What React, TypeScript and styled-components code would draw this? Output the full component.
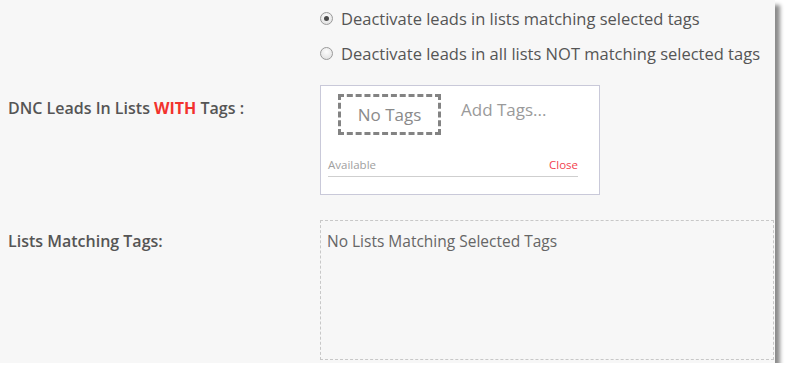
import React from "react";
import styled, { createGlobalStyle } from "styled-components";

const GlobalStyle = createGlobalStyle`
  html, body {
    margin: 0;
    padding: 0;
    background: #ffffff;
  }
  body {
    font-family: "Open Sans", "Noto Sans", sans-serif;
    color: #5a5a5a;
  }
`;

const Panel = styled.div`
  width: 775px;
  height: 363px;
  box-sizing: border-box;
  background: #f7f7f7;
  box-shadow: 5px 5px 4px rgba(0, 0, 0, 0.45);
  padding: 1px 0 0 8px;
  display: grid;
  grid-template-columns: 312px 453px;
  grid-template-rows: auto auto auto;
  align-content: start;
  overflow: hidden;
`;

const Options = styled.div`
  grid-column: 2;
  display: flex;
  flex-direction: column;
`;

const Option = styled.label`
  display: flex;
  align-items: center;
  gap: 8px;
  height: 35px;
  font-size: 16.5px;
  color: #555;
  cursor: pointer;
`;

const Radio = styled.span<{ checked?: boolean }>`
  width: 13px;
  height: 13px;
  box-sizing: border-box;
  border-radius: 50%;
  border: 1px solid #9a9a9a;
  background: radial-gradient(circle at 50% 35%, #fdfdfd 0%, #dcdcdc 100%);
  display: flex;
  align-items: center;
  justify-content: center;
  flex: none;

  &::after {
    content: "";
    width: 5px;
    height: 5px;
    border-radius: 50%;
    background: ${(p) => (p.checked ? "#4a4a4a" : "transparent")};
  }
`;

const Label = styled.div<{ top: number }>`
  grid-column: 1;
  padding-top: ${(p) => p.top}px;
  font-size: 16px;
  font-weight: 600;
  color: #555;
`;

const Red = styled.span`
  color: #f2322d;
  font-weight: 700;
`;

const TagBox = styled.div`
  grid-column: 2;
  margin-top: 14px;
  width: 280px;
  height: 110px;
  box-sizing: border-box;
  background: #fff;
  border: 1px solid #c9c9d9;
  padding: 8px 21px 0 7px;
  display: flex;
  flex-direction: column;
`;

const TagRow = styled.div`
  display: flex;
  align-items: flex-start;
  gap: 20px;
  padding-left: 10px;
  height: 54px;
`;

const EmptyTag = styled.div`
  width: 103px;
  height: 41px;
  box-sizing: border-box;
  border: 3px dashed #838383;
  display: flex;
  align-items: center;
  justify-content: center;
  font-size: 17px;
  color: #8a8a8a;
`;

const AddTags = styled.div`
  font-size: 17px;
  color: #9a9a9a;
  padding-top: 4px;
`;

const Footer = styled.div`
  display: flex;
  justify-content: space-between;
  align-items: flex-end;
  font-size: 11.5px;
  height: 24px;
  border-bottom: 1px solid #cfcfcf;
  color: #a0a0a0;
  padding-bottom: 4px;
`;

const CloseLink = styled.span`
  color: #f2424d;
`;

const ListsBox = styled.div`
  grid-column: 2;
  margin-top: 25px;
  width: 454px;
  height: 140px;
  box-sizing: border-box;
  border: 1px dashed #c8c8c8;
  padding: 9px 6px;
  font-size: 15.5px;
  color: #666;
`;

const App: React.FC = () => {
  return (
    <>
      <GlobalStyle />
      <Panel>
        <Options>
          <Option>
            <Radio checked />
            Deactivate leads in lists matching selected tags
          </Option>
          <Option>
            <Radio />
            Deactivate leads in all lists NOT matching selected tags
          </Option>
        </Options>
        <Label top={26}>
          DNC Leads In Lists <Red>WITH</Red> Tags :
        </Label>
        <TagBox>
          <TagRow>
            <EmptyTag>No Tags</EmptyTag>
            <AddTags>Add Tags...</AddTags>
          </TagRow>
          <Footer>
            <span>Available</span>
            <CloseLink>Close</CloseLink>
          </Footer>
        </TagBox>
        <Label top={35}>Lists Matching Tags:</Label>
        <ListsBox>No Lists Matching Selected Tags</ListsBox>
      </Panel>
    </>
  );
};

export default App;
